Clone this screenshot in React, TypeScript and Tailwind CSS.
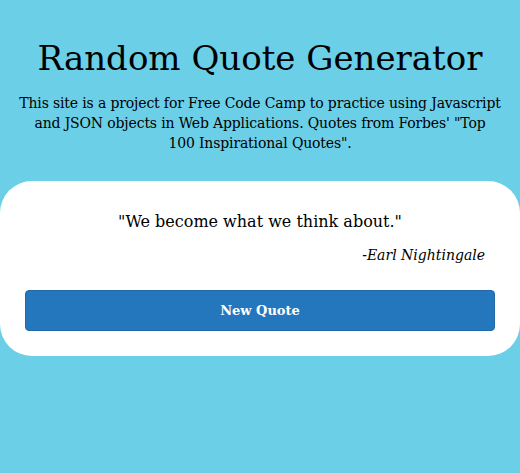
const intro =
  "This site is a project for Free Code Camp to practice using Javascript and JSON objects in Web Applications. Quotes from Forbes' \"Top 100\u00a0Inspirational Quotes\".";

export default function App() {
  return (
    <div className="min-h-[473px] bg-[#6bcfe8] pt-[38px] text-black [font-family:'DejaVu_Serif',serif]">
      <h1 className="text-center text-[34px] leading-[40px]">Random Quote Generator</h1>
      <p className="mx-auto mt-[15px] px-[13px] text-center text-[14px] leading-[20px] tracking-[-0.15px]">
        {intro}
      </p>
      <div className="mt-[28px] rounded-[32px] bg-white px-[25px] pb-[25px] pt-[28px]">
        <p className="text-center text-[16px] leading-[26px]">"We become what we think about."</p>
        <p className="mt-[8px] pr-[10px] text-right text-[14px] italic leading-[24px]">-Earl Nightingale</p>
        <button className="mt-[23px] block h-[41px] w-full rounded-[4px] border border-[#2269a8] bg-[#2577bd] text-[13px] font-bold text-white">
          New Quote
        </button>
      </div>
    </div>
  );
}
